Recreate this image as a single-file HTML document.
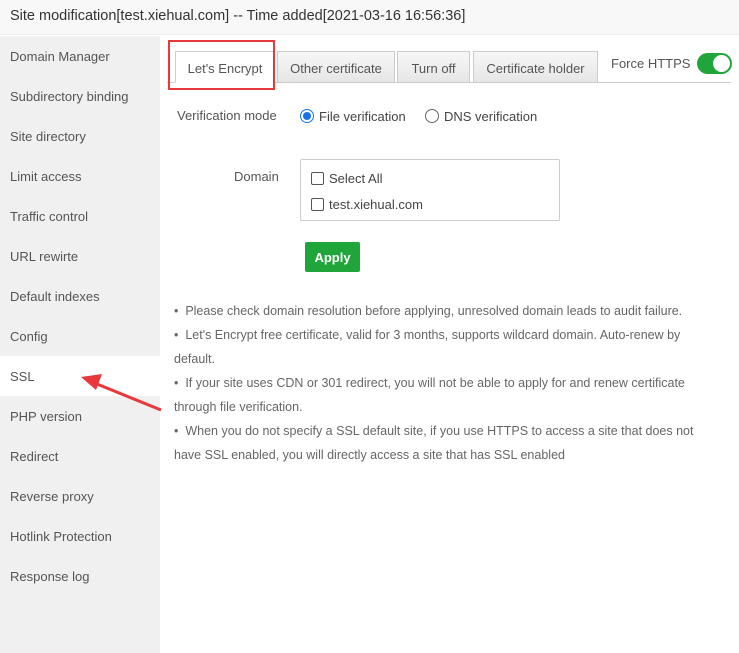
<!DOCTYPE html>
<html><head><style>
*{margin:0;padding:0;box-sizing:border-box}
body{width:739px;height:653px;overflow:hidden;font-family:"Liberation Sans",sans-serif;font-size:13px;color:#555;background:#fff;position:relative}
.hd{position:absolute;left:0;top:0;width:739px;height:35px;background:#f8f8f8;border-bottom:1px solid #eee;font-size:14.5px;color:#333;line-height:33px;padding-left:10px}
.sb{position:absolute;left:0;top:36px;width:160px;height:617px;background:#f0f0f0}
.sb div{height:40px;line-height:42px;padding-left:10px;color:#555;font-size:13px}
.sb div.on{background:#fff}
.abs{position:absolute}
.tab{position:absolute;top:51px;height:32px;border:1px solid #ccc;background:linear-gradient(#f7f7f7,#e6e6e6);line-height:34px;text-align:center;color:#555}
.line{position:absolute;left:167px;top:82px;width:564px;height:1px;background:#ccc}
.cb{display:inline-block;width:13px;height:13px;border:1px solid #555;border-radius:2px;vertical-align:-2px;margin-right:5px}
.rd{display:inline-block;width:14px;height:14px;border:1px solid #666;border-radius:50%;vertical-align:-2px;margin-right:5px;position:relative}
.tips{position:absolute;left:174px;top:299px;width:545px;line-height:24px;font-size:12.5px;color:#666}
.tips p{margin:0}
</style></head><body>
<div class="hd">Site modification[test.xiehual.com] -- Time added[2021-03-16 16:56:36]</div>
<div class="sb">
<div>Domain Manager</div><div>Subdirectory binding</div><div>Site directory</div><div>Limit access</div><div>Traffic control</div><div>URL rewirte</div><div>Default indexes</div><div>Config</div><div class="on">SSL</div><div>PHP version</div><div>Redirect</div><div>Reverse proxy</div><div>Hotlink Protection</div><div>Response log</div>
</div>
<div class="line"></div>
<div class="tab" style="left:175px;width:100px;background:#fff;border-bottom-color:#fff">Let's Encrypt</div>
<div class="tab" style="left:277px;width:118px">Other certificate</div>
<div class="tab" style="left:397px;width:73px">Turn off</div>
<div class="tab" style="left:473px;width:125px">Certificate holder</div>
<div class="abs" style="left:168px;top:40px;width:107px;height:50px;border:2px solid #e8383b"></div>
<div class="abs" style="left:611px;top:56px;color:#555">Force HTTPS</div>
<div class="abs" style="left:697px;top:53px;width:35px;height:21px;border-radius:11px;background:#20a53a"><div class="abs" style="left:16px;top:2px;width:17px;height:17px;border-radius:50%;background:#fff"></div></div>
<div class="abs" style="left:177px;top:108px">Verification mode</div>
<div class="abs" style="left:300px;top:109px;color:#444"><span class="rd" style="border-color:#1a73e8"><span class="abs" style="left:2px;top:2px;width:8px;height:8px;border-radius:50%;background:#1a73e8"></span></span>File verification</div>
<div class="abs" style="left:425px;top:109px;color:#444"><span class="rd"></span>DNS verification</div>
<div class="abs" style="left:234px;top:169px">Domain</div>
<div class="abs" style="left:300px;top:159px;width:260px;height:62px;border:1px solid #ccc;border-radius:2px"></div>
<div class="abs" style="left:311px;top:171px;color:#444"><span class="cb"></span>Select All</div>
<div class="abs" style="left:311px;top:197px;color:#444"><span class="cb"></span>test.xiehual.com</div>
<div class="abs" style="left:305px;top:242px;width:55px;height:30px;background:#20a53a;border-radius:2px;color:#fff;font-weight:bold;text-align:center;line-height:31px">Apply</div>
<div class="tips">
<p>•&nbsp;&nbsp;Please check domain resolution before applying, unresolved domain leads to audit failure.</p>
<p>•&nbsp;&nbsp;Let's Encrypt free certificate, valid for 3 months, supports wildcard domain. Auto-renew by default.</p>
<p>•&nbsp;&nbsp;If your site uses CDN or 301 redirect, you will not be able to apply for and renew certificate through file verification.</p>
<p>•&nbsp;&nbsp;When you do not specify a SSL default site, if you use HTTPS to access a site that does not have SSL enabled, you will directly access a site that has SSL enabled</p>
</div>
<svg class="abs" style="left:78px;top:372px" width="86" height="42"><line x1="83" y1="38" x2="14" y2="10" stroke="#e8383b" stroke-width="3"/><polygon points="3,5 24,2 18,18" fill="#e8383b"/></svg>
</body></html>
